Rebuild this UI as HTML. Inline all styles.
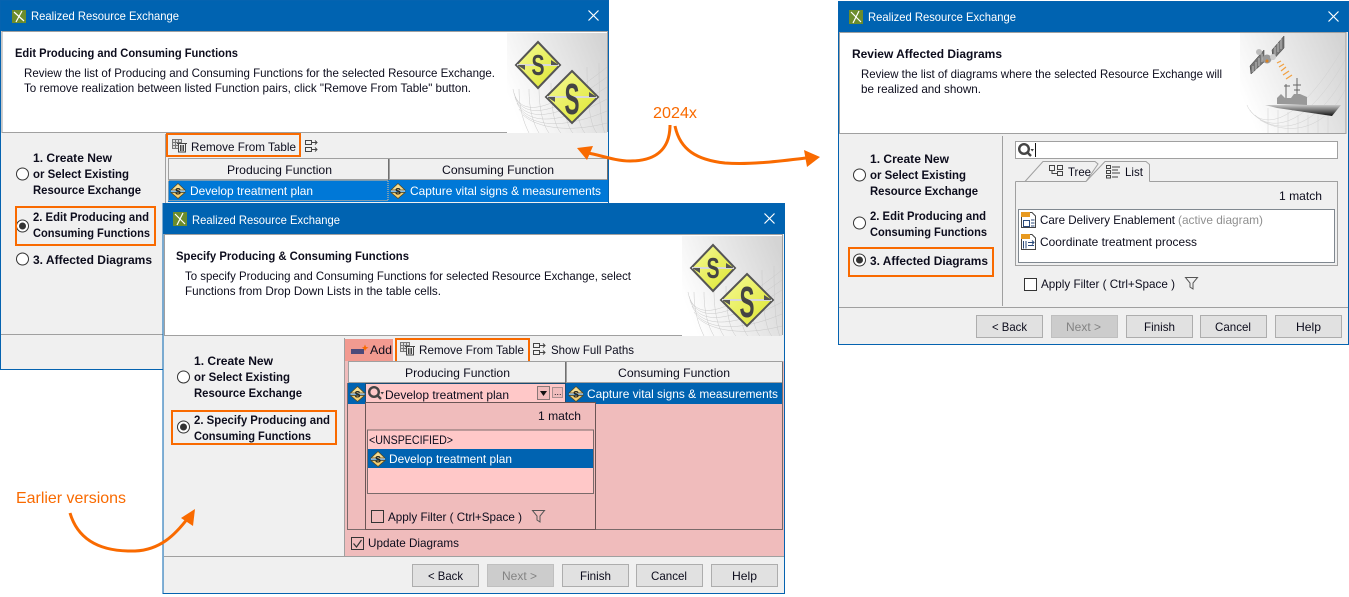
<!DOCTYPE html>
<html><head><meta charset="utf-8"><title>Realized Resource Exchange</title>
<style>
html,body{margin:0;padding:0;background:#fff;width:1349px;height:597px;overflow:hidden}
svg{display:block}
text{font-family:"Liberation Sans",sans-serif;font-size:12px;fill:#0c0c1c;white-space:pre}
.b{font-weight:bold}
.w{fill:#fff}
.t{fill:#fff;font-size:12px}
.o{fill:#f96a00;font-size:16px}
.d{fill:#838383}
.g{fill:#8f8f8f}
.btn{fill:#e1e1e1;stroke:#adadad}
.dis{fill:#ccc;stroke:#bfbfbf}
.or{fill:none;stroke:#f96a00;stroke-width:2}
.rad{fill:#fff;stroke:#333;stroke-width:1}
.hd{fill:#f0f0f0;stroke:#a0a0a0}
.ss{font-size:9px;font-weight:bold;fill:#222}
.s1{font-size:29px;font-weight:bold;fill:#444}
.s2{font-size:44px;font-weight:bold;fill:#444}
</style></head><body>
<svg width="1349" height="597" viewBox="0 0 1349 597" xmlns="http://www.w3.org/2000/svg">
<defs>
<linearGradient id="bg" x1="0" y1="0.6" x2="1" y2="0.2"><stop offset="0" stop-color="#fff"/><stop offset="1" stop-color="#d4d4d4"/></linearGradient>
<linearGradient id="yl" x1="0" y1="0" x2="1" y2="1"><stop offset="0" stop-color="#f6fa9a"/><stop offset="1" stop-color="#dde52c"/></linearGradient>
<linearGradient id="hull" x1="0" y1="0" x2="0" y2="1"><stop offset="0" stop-color="#c8c8c8"/><stop offset="1" stop-color="#111"/></linearGradient>
<g id="waves" fill="none" stroke="#c9c9c9" stroke-width="0.5">
<path d="M6 56C10 78 30 90 100 34"/><path d="M7 60C12 80 34 92 100 44"/><path d="M8 64C14 84 38 94 100 54"/><path d="M10 70C18 88 44 96 100 66"/><path d="M12 76C24 92 52 98 100 78"/><path d="M16 82C30 95 62 100 100 90"/>
<path d="M12 56C12 74 16 88 22 100"/><path d="M22 56C22 76 26 90 32 100"/><path d="M32 54C32 76 36 92 42 100"/><path d="M44 50C44 76 48 94 54 100"/><path d="M56 46C56 76 60 94 66 100"/><path d="M68 40C68 74 72 94 78 100"/><path d="M80 34C80 72 84 94 90 100"/><path d="M92 30C92 70 94 92 98 100"/>
</g>
<g id="bn"><rect width="100" height="100" fill="url(#bg)"/><use href="#waves"/>
<path d="M31 9L53 32L31 55L9 32Z" fill="url(#yl)" stroke="#555" stroke-width="2"/>
<path d="M10 32H52" stroke="#d8d8d8" stroke-width="2"/>
<path d="M44 27L52 32H44ZM18 37L10 32H18Z" fill="#555"/>
<path d="M65 38L91 64L65 90L39 64Z" fill="url(#yl)" stroke="#555" stroke-width="2"/>
<path d="M40 64H90" stroke="#d8d8d8" stroke-width="2"/>
<path d="M82 59L90 64H82ZM48 69L40 64H48Z" fill="#555"/>
</g>
<g id="si"><path d="M8 0.500L15 7H1Z" fill="#f5dc90" stroke="#5a4a20" stroke-width="0.800"/><path d="M1 9.500H15L8 15.500Z" fill="#f3cf72" stroke="#5a4a20" stroke-width="0.800"/><path d="M1 8H15" stroke="#fff"/></g>
<g id="trash"><rect x="0.500" y="0.500" width="9" height="9" fill="#ddd" stroke="#777"/><path d="M0.500 3.500H9.500M0.500 6.500H9.500M3.500 0.500V9.500M6.500 0.500V9.500" stroke="#777"/><rect x="6.500" y="4.500" width="7" height="8.500" fill="#eee" stroke="#444"/><path d="M5 4.500H15M8.500 6V12M10 6V12M11.500 6V12" stroke="#444"/></g>
<g id="paths"><rect x="0.500" y="0.500" width="6" height="4" fill="none" stroke="#444"/><rect x="0.500" y="7.500" width="6" height="4" fill="none" stroke="#444"/><path d="M7 2.500H12M10 0.500L12 2.500L10 4.500M7 9.500H12M10 7.500L12 9.500L10 11.500" fill="none" stroke="#444"/></g>
<g id="mag"><circle cx="6" cy="6" r="4.800" fill="none" stroke="#444" stroke-width="2.400"/><path d="M9.500 9.500L13 13" stroke="#444" stroke-width="2.400"/><path d="M12.500 6H16L14.200 8.500Z" fill="#444"/></g>
<g id="fun"><path d="M0.500 0.500H12.500L8 6V12L5 10V6Z" fill="none" stroke="#555"/></g>
</defs>

<!-- Dialog 1 -->
<rect x="0.500" y="0.500" width="608" height="369" fill="#f0f0f0" stroke="#0563b0"/>
<rect x="1" y="1" width="607" height="30" fill="#0063b1"/>
<rect x="2" y="31.500" width="605.500" height="101" fill="#fff" stroke="#a0a0a0" stroke-width="1"/>
<rect x="507" y="132" width="101" height="2" fill="#f0f0f0"/>
<rect x="12" y="10" width="14" height="13" fill="#6c8c2c"/><path d="M14 12L24 21M22 11L16 22" stroke="#fff" stroke-width="1.200"/>
<text class="t" x="31" y="20" textLength="148" lengthAdjust="spacingAndGlyphs">Realized Resource Exchange</text>
<path d="M588.500 10.500L598.500 20.500M598.500 10.500L588.500 20.500" stroke="#fff" stroke-width="1.200"/>
<text class="b" x="15" y="57" textLength="223" lengthAdjust="spacingAndGlyphs">Edit Producing and Consuming Functions</text>
<text x="24" y="77" textLength="471" lengthAdjust="spacingAndGlyphs">Review the list of Producing and Consuming Functions for the selected Resource Exchange.</text>
<text x="24" y="92" textLength="447" lengthAdjust="spacingAndGlyphs">To remove realization between listed Function pairs, click "Remove From Table" button.</text>
<use href="#bn" x="507" y="33"/>
<text class="s1" x="531.500" y="75" textLength="13" lengthAdjust="spacingAndGlyphs">S</text>
<text class="s2" x="564.500" y="114" textLength="15" lengthAdjust="spacingAndGlyphs">S</text>
<text class="b" x="33" y="162" textLength="79" lengthAdjust="spacingAndGlyphs">1. Create New</text>
<text class="b" x="33" y="178" textLength="96" lengthAdjust="spacingAndGlyphs">or Select Existing</text>
<text class="b" x="33" y="194" textLength="108" lengthAdjust="spacingAndGlyphs">Resource Exchange</text>
<circle class="rad" cx="22.500" cy="174" r="6"/>
<text class="b" x="33" y="221" textLength="116" lengthAdjust="spacingAndGlyphs">2. Edit Producing and</text>
<text class="b" x="33" y="237" textLength="117" lengthAdjust="spacingAndGlyphs">Consuming Functions</text>
<circle class="rad" cx="22.500" cy="226" r="6"/><circle cx="22.500" cy="226" r="3.500" fill="#333"/>
<rect class="or" x="16" y="207" width="139" height="38"/>
<text class="b" x="33" y="264" textLength="119" lengthAdjust="spacingAndGlyphs">3. Affected Diagrams</text>
<circle class="rad" cx="22.500" cy="259" r="6"/>
<path d="M1 334.500H163" stroke="#a0a0a0"/>
<path d="M165.500 134V203" stroke="#a0a0a0"/>
<use href="#trash" x="172" y="139"/>
<text x="191" y="151" textLength="105" lengthAdjust="spacingAndGlyphs">Remove From Table</text>
<rect class="or" x="167" y="134" width="133" height="22"/>
<use href="#paths" x="305" y="140"/>
<rect class="hd" x="168.500" y="158.500" width="220" height="21"/>
<rect class="hd" x="389.500" y="158.500" width="218" height="21"/>
<path d="M388.500 159V180M607.500 159V180" stroke="#707070"/>
<text x="227" y="174" textLength="105" lengthAdjust="spacingAndGlyphs">Producing Function</text>
<text x="442" y="174" textLength="112" lengthAdjust="spacingAndGlyphs">Consuming Function</text>
<rect x="168" y="180" width="440" height="22" fill="#0078d7"/>
<rect x="168.500" y="180.500" width="219.500" height="20" fill="none" stroke="#f0c090" stroke-dasharray="1 1"/>
<use href="#si" x="170" y="183"/><text class="ss" x="175" y="194.500">S</text>
<text class="w" x="190" y="195" textLength="123" lengthAdjust="spacingAndGlyphs">Develop treatment plan</text>
<use href="#si" x="390" y="183"/><text class="ss" x="395" y="194.500">S</text>
<text class="w" x="410" y="195" textLength="191" lengthAdjust="spacingAndGlyphs">Capture vital signs &amp; measurements</text>

<!-- Dialog 2 -->
<rect x="163" y="203.500" width="621.500" height="390" fill="#f0f0f0" stroke="#0563b0"/>
<rect x="163.500" y="204" width="621" height="30" fill="#0063b1"/>
<rect x="164.500" y="234.500" width="618" height="101" fill="#fff" stroke="#a0a0a0"/>
<rect x="682" y="335" width="102" height="2" fill="#f0f0f0"/>
<rect x="173" y="212" width="14" height="14" fill="#6c8c2c"/><path d="M175 214L185 224M183 213L177 225" stroke="#fff" stroke-width="1.200"/>
<text class="t" x="192" y="224" textLength="148" lengthAdjust="spacingAndGlyphs">Realized Resource Exchange</text>
<path d="M764.500 213.500L774.500 223.500M774.500 213.500L764.500 223.500" stroke="#fff" stroke-width="1.200"/>
<text class="b" x="176" y="260" textLength="233" lengthAdjust="spacingAndGlyphs">Specify Producing &amp; Consuming Functions</text>
<text x="185" y="280" textLength="446" lengthAdjust="spacingAndGlyphs">To specify Producing and Consuming Functions for selected Resource Exchange, select</text>
<text x="185" y="295" textLength="256" lengthAdjust="spacingAndGlyphs">Functions from Drop Down Lists in the table cells.</text>
<use href="#bn" x="682" y="236"/>
<text class="s1" x="706.500" y="278" textLength="13" lengthAdjust="spacingAndGlyphs">S</text>
<text class="s2" x="739.500" y="317" textLength="15" lengthAdjust="spacingAndGlyphs">S</text>
<text class="b" x="194" y="365" textLength="79" lengthAdjust="spacingAndGlyphs">1. Create New</text>
<text class="b" x="194" y="381" textLength="96" lengthAdjust="spacingAndGlyphs">or Select Existing</text>
<text class="b" x="194" y="397" textLength="108" lengthAdjust="spacingAndGlyphs">Resource Exchange</text>
<circle class="rad" cx="183.500" cy="377" r="6"/>
<text class="b" x="194" y="424" textLength="136" lengthAdjust="spacingAndGlyphs">2. Specify Producing and</text>
<text class="b" x="194" y="440" textLength="117" lengthAdjust="spacingAndGlyphs">Consuming Functions</text>
<circle class="rad" cx="183.500" cy="427" r="6"/><circle cx="183.500" cy="427" r="3.500" fill="#333"/>
<rect class="or" x="172" y="411" width="164" height="33"/>
<path d="M344.500 338V556" stroke="#a0a0a0"/>
<rect x="345" y="339" width="439" height="217.500" fill="#f0bcbc"/>
<rect x="345" y="339" width="439" height="22" fill="#f0f0f0"/>
<rect x="345" y="339" width="48" height="22" fill="#f29a90"/>
<rect x="351" y="349" width="13" height="5" fill="#4d4a7a"/><path d="M365 344.500L366 347L368.500 347.500L366 349L365 351L364 349L362 347.500L364 347Z" fill="#f96a00"/>
<text x="370" y="354" textLength="22" lengthAdjust="spacingAndGlyphs">Add</text>
<use href="#trash" x="400" y="342"/>
<text x="419" y="354" textLength="105" lengthAdjust="spacingAndGlyphs">Remove From Table</text>
<rect class="or" x="396" y="339" width="133" height="23"/>
<use href="#paths" x="533" y="343"/>
<text x="551" y="354" textLength="83" lengthAdjust="spacingAndGlyphs">Show Full Paths</text>
<rect class="hd" x="348.500" y="361.500" width="217" height="21"/>
<rect class="hd" x="566.500" y="361.500" width="216" height="21"/>
<path d="M565.500 362V383M782.500 362V383" stroke="#707070"/>
<text x="405" y="377" textLength="105" lengthAdjust="spacingAndGlyphs">Producing Function</text>
<text x="618" y="377" textLength="112" lengthAdjust="spacingAndGlyphs">Consuming Function</text>
<rect x="348" y="383" width="435" height="21" fill="#0063b1"/>
<rect x="366" y="384" width="199" height="19" fill="#ffc8c8"/>
<rect x="365.500" y="383.500" width="200" height="20" fill="none" stroke="#333" stroke-dasharray="1 1"/>
<use href="#si" x="349.500" y="386"/><text class="ss" x="354.500" y="397.500">S</text>
<use href="#mag" x="368" y="386"/>
<text x="385" y="399" textLength="124" lengthAdjust="spacingAndGlyphs">Develop treatment plan</text>
<rect x="537.500" y="386.500" width="12" height="13" fill="#f0bcbc" stroke="#887777"/><path d="M540 391H547L543.500 396Z" fill="#111"/>
<rect x="552.500" y="387.500" width="10" height="10" fill="#f0bcbc" stroke="#a89090"/><text x="554" y="395" style="font-size:9px">...</text>
<use href="#si" x="568" y="386"/><text class="ss" x="573" y="397.500">S</text>
<text class="w" x="587" y="398" textLength="191" lengthAdjust="spacingAndGlyphs">Capture vital signs &amp; measurements</text>
<path d="M347.500 383V529.500H783M782.500 383V529" fill="none" stroke="#7a6a6a"/>
<rect x="365.500" y="402.500" width="230" height="127" fill="#f0bcbc" stroke="#6b5555"/>
<text x="538" y="420" textLength="43" lengthAdjust="spacingAndGlyphs">1 match</text>
<rect x="367.500" y="430" width="226" height="63.500" fill="#ffc8c8" stroke="#7a6a6a"/>
<text x="369" y="444" textLength="84" lengthAdjust="spacingAndGlyphs">&lt;UNSPECIFIED&gt;</text>
<rect x="368" y="449" width="225" height="19" fill="#0063b1"/>
<use href="#si" x="370" y="451"/><text class="ss" x="375" y="462.500">S</text>
<text class="w" x="389" y="463" textLength="123" lengthAdjust="spacingAndGlyphs">Develop treatment plan</text>
<rect x="371.500" y="510.500" width="12" height="12" fill="#f0bcbc" stroke="#333"/>
<text x="388" y="521" textLength="134" lengthAdjust="spacingAndGlyphs">Apply Filter ( Ctrl+Space )</text>
<use href="#fun" x="532" y="510"/>
<rect x="351.500" y="537.500" width="12" height="12" fill="#f0bcbc" stroke="#333"/><path d="M353.500 543.500L356.500 547L361.500 540" fill="none" stroke="#333" stroke-width="1.200"/>
<text x="368" y="547" textLength="91" lengthAdjust="spacingAndGlyphs">Update Diagrams</text>
<path d="M164 556.500H784" stroke="#a0a0a0"/>
<rect class="btn" x="412.500" y="564.500" width="66" height="22"/><text x="428" y="580" textLength="35" lengthAdjust="spacingAndGlyphs">&lt; Back</text>
<rect class="dis" x="487.500" y="564.500" width="66" height="22"/><text class="d" x="502" y="580" textLength="35" lengthAdjust="spacingAndGlyphs">Next &gt;</text>
<rect class="btn" x="562.500" y="564.500" width="66" height="22"/><text x="580" y="580" textLength="31" lengthAdjust="spacingAndGlyphs">Finish</text>
<rect class="btn" x="636.500" y="564.500" width="66" height="22"/><text x="651" y="580" textLength="36" lengthAdjust="spacingAndGlyphs">Cancel</text>
<rect class="btn" x="711.500" y="564.500" width="66" height="22"/><text x="732" y="580" textLength="25" lengthAdjust="spacingAndGlyphs">Help</text>

<!-- Dialog 3 -->
<rect x="838.500" y="1.500" width="510" height="343" fill="#f0f0f0" stroke="#0563b0"/>
<rect x="839" y="2" width="509" height="30" fill="#0063b1"/>
<rect x="839.500" y="32.500" width="506.500" height="101" fill="#fff" stroke="#a0a0a0"/>
<rect x="849" y="10" width="14" height="14" fill="#6c8c2c"/><path d="M851 12L861 22M859 11L853 23" stroke="#fff" stroke-width="1.200"/>
<text class="t" x="868" y="21" textLength="148" lengthAdjust="spacingAndGlyphs">Realized Resource Exchange</text>
<path d="M1328.500 11.500L1338.500 21.500M1338.500 11.500L1328.500 21.500" stroke="#fff" stroke-width="1.200"/>
<text class="b" x="852" y="58" textLength="150" lengthAdjust="spacingAndGlyphs">Review Affected Diagrams</text>
<text x="861" y="78" textLength="361" lengthAdjust="spacingAndGlyphs">Review the list of diagrams where the selected Resource Exchange will</text>
<text x="861" y="93" textLength="120" lengthAdjust="spacingAndGlyphs">be realized and shown.</text>
<rect x="1240" y="33" width="105.500" height="100" fill="url(#bg)"/>
<g fill="none" stroke="#d0d0d0" stroke-width="0.500"><path d="M1247 105C1255 125 1290 140 1345 45"/><path d="M1250 110C1262 128 1300 140 1345 60"/><path d="M1255 115C1270 130 1310 140 1345 75"/><path d="M1260 120C1280 132 1320 138 1345 90"/><path d="M1268 108V133M1278 110V133M1288 112V133M1298 115V133M1308 115V133M1318 112V133M1328 110V133"/></g>
<path d="M1250 66L1264 50V62L1251 74Z" fill="#777" stroke="#333" stroke-width="0.500"/>
<path d="M1272 50L1284 36V48L1273 60Z" fill="#777" stroke="#333" stroke-width="0.500"/>
<path d="M1253 66V72M1256 62V70M1259 58V66M1262 54V62M1275 47V55M1278 43V52M1281 39V49" stroke="#ddd" stroke-width="0.700"/>
<circle cx="1259" cy="52" r="3" fill="#bbb"/><circle cx="1267" cy="59" r="4.500" fill="#999"/><circle cx="1273" cy="57" r="3" fill="#ccc"/><circle cx="1267" cy="61" r="1.500" fill="#d88020"/>
<path d="M1277 63L1281 61M1279 67L1284 64M1281 71L1286 67M1283 75L1289 71M1286 79L1292 75" stroke="#f2a040" stroke-width="1.200"/>
<path d="M1297 78V97M1293 85H1301M1294 90H1300M1286 84V98M1284 86H1290" stroke="#666"/>
<path d="M1277 104V98L1281 94L1285 98L1291 98L1294 94L1300 94L1307 97V105Z" fill="#999"/>
<path d="M1265 105L1341 105L1332 116L1277 108Z" fill="url(#hull)"/>
<text class="b" x="870" y="163" textLength="79" lengthAdjust="spacingAndGlyphs">1. Create New</text>
<text class="b" x="870" y="179" textLength="96" lengthAdjust="spacingAndGlyphs">or Select Existing</text>
<text class="b" x="870" y="195" textLength="108" lengthAdjust="spacingAndGlyphs">Resource Exchange</text>
<circle class="rad" cx="859.500" cy="175" r="6"/>
<text class="b" x="870" y="220" textLength="116" lengthAdjust="spacingAndGlyphs">2. Edit Producing and</text>
<text class="b" x="870" y="236" textLength="117" lengthAdjust="spacingAndGlyphs">Consuming Functions</text>
<circle class="rad" cx="859.500" cy="223" r="6"/>
<text class="b" x="870" y="265" textLength="118" lengthAdjust="spacingAndGlyphs">3. Affected Diagrams</text>
<circle class="rad" cx="859.500" cy="260" r="6"/><circle cx="859.500" cy="260" r="3.500" fill="#333"/>
<rect class="or" x="849" y="248" width="144" height="28"/>
<path d="M1002.500 136V306" stroke="#a0a0a0"/>
<rect x="1015.500" y="141.500" width="322" height="17" fill="#fff" stroke="#a0a0a0"/>
<use href="#mag" x="1018" y="143"/><path d="M1035.500 143V157" stroke="#111"/>
<path d="M1025 181.500L1043 161.500H1095L1098 164L1086 181.500" fill="#f0f0f0" stroke="#a0a0a0"/>
<path d="M1086 181.500L1105 161.500H1146L1149.500 164.500V181.500" fill="#f0f0f0" stroke="#a0a0a0"/>
<path d="M1015.500 181.500H1086M1149.500 181.500H1337.500V265.500H1015.500V181.500" fill="none" stroke="#a0a0a0"/>
<path d="M1049.500 165.500H1054.500V170.500H1049.500ZM1057.500 171.500H1062.500V175.500H1057.500ZM1057.500 165.500H1062.500V169.500H1057.500ZM1052 170.500V173.500H1057.500" fill="none" stroke="#444"/>
<text x="1068" y="176" textLength="23" lengthAdjust="spacingAndGlyphs">Tree</text>
<path d="M1106.500 165.500H1110.500V168.500H1106.500ZM1106.500 170.500H1110.500V173.500H1106.500ZM1106.500 175.500H1110.500V178H1106.500ZM1112 167H1120M1112 170H1118M1112 173H1120M1112 177H1118" fill="none" stroke="#444"/>
<text x="1125" y="176" textLength="18" lengthAdjust="spacingAndGlyphs">List</text>
<text x="1279" y="200" textLength="43" lengthAdjust="spacingAndGlyphs">1 match</text>
<rect x="1018.500" y="209.500" width="316" height="53" fill="#fff" stroke="#808890"/>
<g>
<path d="M1021.500 212.500H1032L1035.500 216V227.500H1021.500Z" fill="#fff" stroke="#444"/><rect x="1021" y="212" width="9" height="5" fill="#e89a20"/><path d="M1023.500 220.500H1029.500V226.500H1023.500ZM1031 220H1034.500M1031 223H1034.500M1031 226H1034.500" fill="none" stroke="#2a4a7a"/>
</g>
<text x="1040" y="224" textLength="135" lengthAdjust="spacingAndGlyphs">Care Delivery Enablement</text>
<text class="g" x="1178" y="224" textLength="85" lengthAdjust="spacingAndGlyphs">(active diagram)</text>
<g>
<path d="M1021.500 234.500H1032L1035.500 238V249.500H1021.500Z" fill="#fff" stroke="#444"/><rect x="1021" y="234" width="9" height="5" fill="#e89a20"/><path d="M1023.500 241V248.500M1026 241V248.500M1028 242.500H1034M1028 245.500H1034M1032 240.500L1034 242.500L1032 244.500" fill="none" stroke="#2a4a7a"/>
</g>
<text x="1040" y="246" textLength="157" lengthAdjust="spacingAndGlyphs">Coordinate treatment process</text>
<rect x="1024.500" y="278.500" width="12" height="12" fill="#fff" stroke="#333"/>
<text x="1041" y="288" textLength="134" lengthAdjust="spacingAndGlyphs">Apply Filter ( Ctrl+Space )</text>
<use href="#fun" x="1185" y="277"/>
<path d="M839 307.500H1348" stroke="#a0a0a0"/>
<rect class="btn" x="976.500" y="315.500" width="66" height="22"/><text x="992" y="331" textLength="35" lengthAdjust="spacingAndGlyphs">&lt; Back</text>
<rect class="dis" x="1051.500" y="315.500" width="66" height="22"/><text class="d" x="1066" y="331" textLength="35" lengthAdjust="spacingAndGlyphs">Next &gt;</text>
<rect class="btn" x="1126.500" y="315.500" width="66" height="22"/><text x="1144" y="331" textLength="31" lengthAdjust="spacingAndGlyphs">Finish</text>
<rect class="btn" x="1200.500" y="315.500" width="66" height="22"/><text x="1215" y="331" textLength="36" lengthAdjust="spacingAndGlyphs">Cancel</text>
<rect class="btn" x="1275.500" y="315.500" width="66" height="22"/><text x="1296" y="331" textLength="25" lengthAdjust="spacingAndGlyphs">Help</text>

<!-- Annotations -->
<text class="o" x="653" y="118" textLength="44" lengthAdjust="spacingAndGlyphs">2024x</text>
<text class="o" x="16" y="503" textLength="110" lengthAdjust="spacingAndGlyphs">Earlier versions</text>
<g fill="none" stroke="#f96a00" stroke-width="3">
<path d="M670 125C670 150 655 161 630 161C615 161 600 155 588 153"/>
<path d="M675 126C680 150 697 160 725 163C750 165 780 161 806 158"/>
<path d="M70 513C78 540 100 552 135 551C160 550 175 535 188 518"/>
</g>
<g fill="#f96a00">
<path d="M577 148L593 146L587 160Z"/>
<path d="M820 157L804 150L807 167Z"/>
<path d="M195 509L181 518L193 526Z"/>
</g>
</svg>
</body></html>
